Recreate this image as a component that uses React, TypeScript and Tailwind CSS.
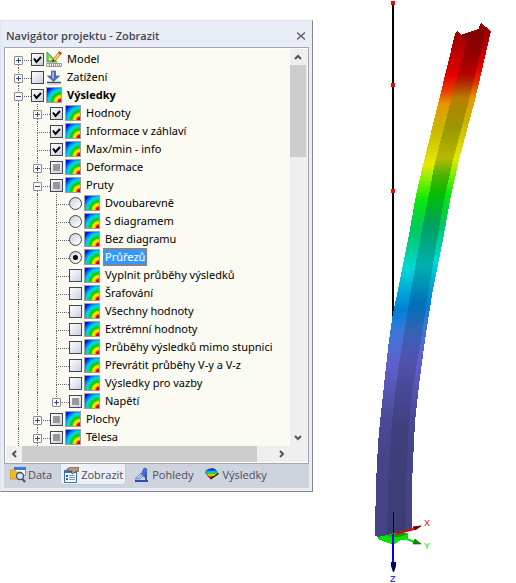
import React from 'react';
import { clsx } from 'clsx';

type Control = 'on' | 'off' | 'mixed' | 'radio';

interface TreeItem {
  label: string;
  depth: number;
  control: Control;
  checked?: boolean;
  expander?: 'plus' | 'minus';
  icon?: 'model' | 'load';
  last?: boolean;
}

const items: TreeItem[] = [
  { label: 'Model', depth: 0, control: 'on', expander: 'plus', icon: 'model' },
  { label: 'Zatížení', depth: 0, control: 'off', expander: 'plus', icon: 'load' },
  { label: 'Výsledky', depth: 0, control: 'on', expander: 'minus' },
  { label: 'Hodnoty', depth: 1, control: 'on', expander: 'plus' },
  { label: 'Informace v záhlaví', depth: 1, control: 'on' },
  { label: 'Max/min - info', depth: 1, control: 'on' },
  { label: 'Deformace', depth: 1, control: 'mixed', expander: 'plus' },
  { label: 'Pruty', depth: 1, control: 'mixed', expander: 'minus' },
  { label: 'Dvoubarevně', depth: 2, control: 'radio' },
  { label: 'S diagramem', depth: 2, control: 'radio' },
  { label: 'Bez diagramu', depth: 2, control: 'radio' },
  { label: 'Průřezů', depth: 2, control: 'radio', checked: true },
  { label: 'Vyplnit průběhy výsledků', depth: 2, control: 'off' },
  { label: 'Šrafování', depth: 2, control: 'off' },
  { label: 'Všechny hodnoty', depth: 2, control: 'off' },
  { label: 'Extrémní hodnoty', depth: 2, control: 'off' },
  { label: 'Průběhy výsledků mimo stupnici', depth: 2, control: 'off' },
  { label: 'Převrátit průběhy V-y a V-z', depth: 2, control: 'off' },
  { label: 'Výsledky pro vazby', depth: 2, control: 'off' },
  { label: 'Napětí', depth: 2, control: 'mixed', expander: 'plus', last: true },
  { label: 'Plochy', depth: 1, control: 'mixed', expander: 'plus' },
  { label: 'Tělesa', depth: 1, control: 'mixed', expander: 'plus' },
];

const ResultIcon = () => (
  <svg viewBox="0 0 16 16" className="size-4 shrink-0" aria-hidden="true">
    <rect width="16" height="16" fill="#a39da0" />
    <svg x="1" y="1" width="14" height="14" viewBox="0 0 14 14">
      <rect width="14" height="14" fill="#0018e0" />
      <circle cx="14" cy="14" r="16.500" fill="#0060f0" />
      <circle cx="14" cy="14" r="15" fill="#0098f8" />
      <circle cx="14" cy="14" r="13.500" fill="#00d0f4" />
      <circle cx="14" cy="14" r="11.500" fill="#00d890" />
      <circle cx="14" cy="14" r="10" fill="#10cc10" />
      <circle cx="14" cy="14" r="7.600" fill="#a8e400" />
      <circle cx="14" cy="14" r="6.600" fill="#ffdc00" />
      <circle cx="14" cy="14" r="4" fill="#f07000" />
      <circle cx="14" cy="14" r="3" fill="#d80000" />
    </svg>
  </svg>
);

const ModelIcon = () => (
  <svg viewBox="0 0 16 16" className="size-4 shrink-0" aria-hidden="true">
    <path d="M1 1v10h10z" fill="#7ccf50" stroke="#48a838" />
    <path d="M3 6v3h3z" fill="#fff" />
    <path d="M7 8l6-7 2 2-6 7-3 1z" fill="#f4cf48" stroke="#8a7440" strokeWidth=".7" />
    <path d="M12 2l1.500-2L16 2l-1.500 2z" fill="#c84848" />
    <path d="M6 11l1-3 2 2z" fill="#333" />
    <path d="M.5 12.500h15v3H.5z" fill="#f2f2ee" stroke="#999" />
    <path d="M3.500 13v2M5.500 13v2M7.500 13v2M9.500 13v2M11.500 13v2M13.500 13v2" stroke="#888" strokeWidth=".8" />
  </svg>
);

const LoadIcon = () => (
  <svg viewBox="0 0 16 16" className="size-4 shrink-0" aria-hidden="true">
    <path d="M5.500 2h4v5h4l-6 5.500L1.500 7h4z" fill="#5474bc" stroke="#304c90" strokeWidth=".7" />
    <path d="M7 2.500v7" stroke="#b0c2ee" strokeWidth="1.500" />
    <path d="M1 13.500h14" stroke="#384868" strokeWidth="1.500" />
    <path d="M2 15h13" stroke="#b8bcc8" />
  </svg>
);

const ItemControl = ({ item, id }: { item: TreeItem; id: string }) => {
  if (item.control === 'radio') {
    return (
      <span className="relative size-[13px] shrink-0">
        <input
          id={id}
          type="radio"
          name="bar-results"
          defaultChecked={item.checked}
          className="peer block size-[13px] appearance-none rounded-full border border-[#444] bg-linear-to-br from-[#ccd3e0] to-white"
        />
        <span className="pointer-events-none absolute inset-1 hidden rounded-full bg-black peer-checked:block" />
      </span>
    );
  }
  return (
    <span className="relative size-[13px] shrink-0">
      <input
        id={id}
        type="checkbox"
        defaultChecked={item.control === 'on'}
        ref={(el) => {
          if (el) el.indeterminate = item.control === 'mixed';
        }}
        className="peer block size-[13px] appearance-none border border-[#45454d] bg-linear-to-br from-white to-[#c8d0df]"
      />
      <svg
        viewBox="0 0 13 13"
        className="pointer-events-none absolute inset-0 hidden peer-checked:block"
        aria-hidden="true"
      >
        <path d="M3 5.500L5.500 9L10 4" fill="none" stroke="#000" strokeWidth="2" />
      </svg>
      <span className="pointer-events-none absolute inset-[3px] hidden bg-[#989898] peer-indeterminate:block" />
    </span>
  );
};

const TreeRow = ({ item, index }: { item: TreeItem; index: number }) => {
  const id = `item-${index}`;
  return (
    <li className="flex h-[18px] items-center">
      {Array.from({ length: item.depth }, (_, i) => (
        <span key={i} className="flex w-[19px] shrink-0 self-stretch pl-[9px]">
          <span className="border-l border-dotted border-[#666]" />
        </span>
      ))}
      <span className="relative flex w-[22px] shrink-0 flex-col self-stretch pl-[9px]">
        <span
          className={clsx(
            'h-[11px] border-b border-dotted border-[#666]',
            index > 0 && 'border-l'
          )}
        />
        {!item.last && <span className="flex-1 border-l border-dotted border-[#666]" />}
        {item.expander && (
          <button
            type="button"
            aria-label={`${item.expander === 'plus' ? 'Rozbalit' : 'Sbalit'} ${item.label}`}
            className="absolute top-1.5 left-[5px] size-[9px] rounded-[1px] border border-[#8c8c8c] bg-white"
          >
            <svg viewBox="0 0 7 7" className="block size-[7px]" shapeRendering="crispEdges">
              <path d={item.expander === 'plus' ? 'M1 3h5v1H1zM3 1h1v5H3z' : 'M1 3h5v1H1z'} fill="#2c46a0" />
            </svg>
          </button>
        )}
      </span>
      <ItemControl item={item} id={id} />
      <span className="ml-0.5">
        {item.icon === 'model' ? <ModelIcon /> : item.icon === 'load' ? <LoadIcon /> : <ResultIcon />}
      </span>
      <label
        htmlFor={id}
        className={clsx(
          'ml-[3px] border px-px leading-4 whitespace-nowrap',
          item.checked ? 'border-dotted border-[#d07020] bg-[#3399ff] text-white' : 'border-transparent',
          item.label === 'Výsledky' && "font-['Open_Sans',sans-serif] font-bold"
        )}
      >
        {item.label}
      </label>
    </li>
  );
};

const arrows = {
  up: 'M1 6l3-3 3 3',
  down: 'M1 2l3 3 3-3',
  left: 'M6 1L3 4l3 3',
  right: 'M2 1l3 3-3 3',
};

const ScrollButton = ({ dir, label }: { dir: keyof typeof arrows; label: string }) => (
  <button type="button" aria-label={label} className="flex size-4 shrink-0 items-center justify-center">
    <svg viewBox="0 0 8 8" className="size-2">
      <path d={arrows[dir]} fill="none" stroke="#555" strokeWidth="2" />
    </svg>
  </button>
);

const DataTabIcon = () => (
  <svg viewBox="0 0 16 16" className="size-4" aria-hidden="true">
    <path d="M4.500.5h11v8h-11z" fill="#fff" stroke="#6090d0" />
    <path d="M4 0h12v3H4z" fill="#3878d0" />
    <path d="M0 3h5l1 2h5v7H0z" fill="#f4b828" stroke="#c08818" strokeWidth=".6" />
    <circle cx="10" cy="9" r="3.500" fill="#d8e8f8" stroke="#405070" strokeWidth="1.300" />
    <path d="M12.500 12l2.500 3" stroke="#405070" strokeWidth="2" />
  </svg>
);

const DisplayTabIcon = () => (
  <svg viewBox="0 0 16 16" className="size-4" aria-hidden="true">
    <path d="M1.500 3.500h12v12h-12z" fill="#fff" stroke="#3870b8" />
    <path d="M1 3h13v3H1z" fill="#3870b8" />
    <path d="M3 8h2v2H3zM3 11h2v2H3z" fill="#3060a8" />
    <path d="M6 8.500h6M6 10.500h6M6 12.500h6" stroke="#7898c8" />
    <path d="M4 2l4-2 8 0v4l-4 1-2 2-2-1 1-2-4 0z" fill="#b89880" stroke="#504038" strokeWidth=".7" />
  </svg>
);

const ViewsTabIcon = () => (
  <svg viewBox="0 0 16 16" className="size-4" aria-hidden="true">
    <path d="M10 1l3 1-2 8-4-2z" fill="#4870d0" stroke="#2848a0" strokeWidth=".6" />
    <path d="M7 6l-6 6h5l3-3z" fill="#a8c0f0" stroke="#4068c0" strokeWidth=".6" />
    <path d="M12 5v9" stroke="#3058b8" strokeWidth="2" />
    <path d="M1 13h13v2H1z" fill="#2c50b0" />
  </svg>
);

const ResultsTabIcon = () => (
  <svg viewBox="0 0 16 16" className="size-4" aria-hidden="true">
    <defs>
      <linearGradient id="fan" x1="0" y1="0" x2="0" y2="1">
        <stop offset="0" stopColor="#1010c0" />
        <stop offset=".2" stopColor="#0050f0" />
        <stop offset=".35" stopColor="#00d8e0" />
        <stop offset=".5" stopColor="#20d020" />
        <stop offset=".65" stopColor="#f8e800" />
        <stop offset=".85" stopColor="#f01000" />
      </linearGradient>
    </defs>
    <path d="M1 5l8-3.500L12 3l3 4-8 5.500-3-3z" fill="#302020" />
    <path d="M1 4q5-4 10-2l3 4-8 5.500z" fill="url(#fan)" />
  </svg>
);

const tabs = [
  { label: 'Data', Icon: DataTabIcon },
  { label: 'Zobrazit', Icon: DisplayTabIcon },
  { label: 'Pohledy', Icon: ViewsTabIcon },
  { label: 'Výsledky', Icon: ResultsTabIcon },
];

const Navigator = () => (
  <section className="mt-5 border border-t-[#dfe4ef] border-r-[#85858d] border-b-[#85858d] border-l-[#dfe4ef] bg-[#e9edf7] px-[3px] pb-[3px]">
    <header className="flex h-[26px] items-center justify-between pt-1 pr-1 pl-0.5">
      <h1 className="font-['Open_Sans',sans-serif] font-semibold text-[#45454f]">
        Navigátor projektu - Zobrazit
      </h1>
      <button type="button" aria-label="Zavřít">
        <svg viewBox="0 0 8 8" className="size-2">
          <path d="M0 .5l8 7M8 .5l-8 7" stroke="#666" strokeWidth="1.500" />
        </svg>
      </button>
    </header>

    <div className="border border-[#a2a6b5] bg-white p-px pr-0">
      <div className="flex bg-[#efefef]">
        <ul className="min-w-0 flex-1 overflow-hidden bg-[#fcfbf3] pt-px pl-[3px]">
          {items.map((item, index) => (
            <TreeRow key={item.label} item={item} index={index} />
          ))}
        </ul>
        <div className="mr-0.5 flex w-4 flex-col">
          <ScrollButton dir="up" label="Nahoru" />
          <div className="flex-1">
            <div className="h-[92px] bg-[#cdcdcd]" />
          </div>
          <ScrollButton dir="down" label="Dolů" />
        </div>
      </div>
      <div className="flex h-4 bg-[#efefef] pr-[18px]">
        <ScrollButton dir="left" label="Doleva" />
        <div className="flex-1">
          <div className="h-full w-14/15 bg-[#cdcdcd]" />
        </div>
        <ScrollButton dir="right" label="Doprava" />
      </div>
    </div>

    <nav className="flex h-6 items-start gap-[5px] bg-[#ced3de] px-[3px] font-['Open_Sans',sans-serif] text-[#4a4e5c]">
      {tabs.map(({ label, Icon }) => (
        <button
          key={label}
          type="button"
          className={clsx(
            'flex h-[21px] items-center gap-0.5 rounded-b-sm border border-t-0 px-0.5 pt-0.5',
            label === 'Zobrazit' ? 'border-[#b8d4dc] bg-[#eef0f5]' : 'border-transparent'
          )}
        >
          <Icon />
          {label}
        </button>
      ))}
    </nav>
  </section>
);

const flangeStops: [number, string][] = [
  [30, '#980000'],
  [52, '#b80000'],
  [76, '#e80000'],
  [90, '#e83800'],
  [104, '#e89800'],
  [130, '#c8b800'],
  [164, '#e8e800'],
  [180, '#80f000'],
  [200, '#08e80c'],
  [230, '#00c860'],
  [268, '#00d8d8'],
  [310, '#0080d8'],
  [330, '#3878d8'],
  [362, '#6060d0'],
  [390, '#5656b4'],
  [420, '#4a4a98'],
  [460, '#444488'],
  [540, '#444484'],
];

const webStops: [number, string][] = [
  [30, '#800000'],
  [55, '#980000'],
  [74, '#b80000'],
  [84, '#b03000'],
  [98, '#b88000'],
  [128, '#989800'],
  [158, '#b8b800'],
  [176, '#48b400'],
  [196, '#00bc08'],
  [226, '#00a060'],
  [265, '#00b0b0'],
  [305, '#0070b8'],
  [330, '#3064b4'],
  [358, '#5252b0'],
  [390, '#484898'],
  [430, '#3f3f7c'],
  [540, '#3c3c76'],
];

const FaceGradient = ({ id, stops, shift }: {
  id: string;
  stops: [number, string][];
  shift: number;
}) => (
  <linearGradient
    id={id}
    gradientUnits="userSpaceOnUse"
    x1="0"
    y1="0"
    x2="0"
    y2="583"
    gradientTransform={`translate(0 ${shift})`}
  >
    {stops.map(([y, color]) => (
      <stop key={y} offset={y / 583} stopColor={color} />
    ))}
  </linearGradient>
);

const BeamView = () => (
  <svg viewBox="313 0 203 583" className="block h-auto w-full" role="img" aria-label="Deformace prutu">
    <defs>
      <FaceGradient id="left" stops={flangeStops} shift={0} />
      <FaceGradient id="web" stops={webStops} shift={0} />
      <FaceGradient id="right" stops={flangeStops} shift={-6} />
    </defs>
    <path d="M393 3V318" stroke="#000" strokeWidth="2" shapeRendering="crispEdges" />
    <g fill="#f80000" shapeRendering="crispEdges">
      <circle cx="393" cy="3" r="2.500" />
      <circle cx="393" cy="85" r="2.500" />
      <circle cx="393" cy="191" r="2.500" />
    </g>

    {/* right flange */}
    <path
      d="M481 23L491 31L475 100L459 160L450 200L443 240L432 295L425 340L419 385L415 422L412 483L412 530L407 532L400 530L400 483L430 240L470 70L478 30Z"
      fill="url(#right)"
      shapeRendering="crispEdges"
    />
    {/* web */}
    <path
      d="M461 35L478 29L485 27L484 40L469 100L453 160L444 200L437 240L428 295L421 340L413 385L409 422L406 483L406 531L387 540L380 540L385 422L402 290L440 100Z"
      fill="url(#web)"
      shapeRendering="crispEdges"
    />
    {/* left flange */}
    <path
      d="M457 31L462 35L467 41L451 100L434 167L428 200L420 240L411 290L403 340L396 385L392 422L388 483L387 540L375 536L375 530L376 483L378 444L380 422L384 385L389 340L393 313L398 290L408 240L416 195L423 165L439 100L455 34Z"
      fill="url(#left)"
      shapeRendering="crispEdges"
    />

    {/* support and axes */}
    <path d="M378 537l9-2 7-2h14v6l-7 1-7 4h-3l-13-5z" fill="#00e400" shapeRendering="crispEdges" />
    <path d="M387 536l6-2 11-1 3 1-7 3-8 0z" fill="#00a800" />
    <path d="M396 534l18-5" stroke="#f00000" strokeWidth="2" />
    <path d="M413 527l8-1-6 4z" fill="#780000" stroke="#780000" />
    <path d="M404 538l11 4" stroke="#00e800" strokeWidth="2" />
    <path d="M415 539l6 5-8 0z" fill="#009000" stroke="#006000" strokeWidth=".6" />
    <path d="M393.500 512v23" stroke="#000" />
    <path d="M393 534v29" stroke="#0000f4" strokeWidth="2" />
    <path d="M391 562h5v4l-2 6h-1l-2-6z" fill="#000060" />
    <g fontFamily="Liberation Sans, sans-serif" fontSize="9">
      <text x="424" y="526" fill="#f00000">X</text>
      <text x="424" y="549" fill="#00e800">Y</text>
      <text x="390" y="582" fill="#0000f0">Z</text>
    </g>
  </svg>
);

export default function App() {
  return (
    <main className="grid grid-cols-[313fr_203fr] items-start bg-white font-['Noto_Sans',sans-serif] text-[11px] leading-4 text-black">
      <Navigator />
      <BeamView />
    </main>
  );
}
